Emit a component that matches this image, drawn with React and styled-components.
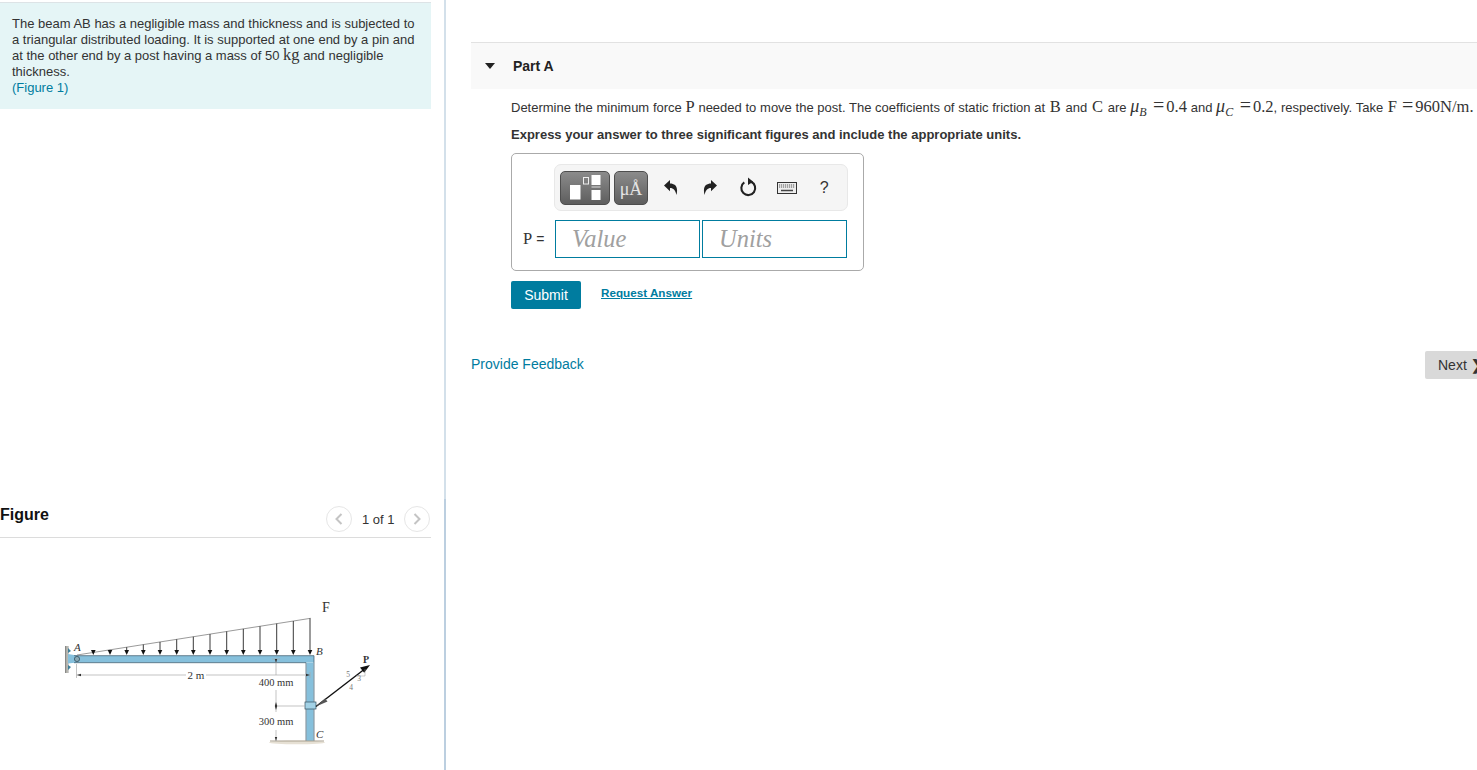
import React from 'react';
import styled, { createGlobalStyle } from 'styled-components';

const GlobalStyle = createGlobalStyle`
  html, body {
    margin: 0;
    height: 100%;
    overflow: hidden;
    background: #fff;
  }
  body {
    color: #333;
    font-family: "Liberation Sans", Arial, sans-serif;
    font-size: 14px;
  }
`;

const Page = styled.div`
  display: flex;
  width: 1477px;
  height: 770px;
  overflow: hidden;
`;

const LeftColumn = styled.div`
  display: flex;
  flex: none;
  flex-direction: column;
  width: 446px;
`;

const IntroArea = styled.div`
  box-sizing: border-box;
  height: 499px;
  padding-top: 2px;
  border-right: 2px solid #d3e0ea;
`;

const Intro = styled.div`
  box-sizing: border-box;
  width: 431px;
  height: 107px;
  padding: 13px 12px 0;
  font-size: 13px;
  line-height: 16px;
  background: #e5f5f6;
  border-top: 1px solid #dde3e6;
`;

const FigureLink = styled.a`
  color: #007c9f;
`;

const FigureArea = styled.div`
  flex: 1;
  box-sizing: border-box;
  border-right: 2px solid #bccfe0;
`;

const FigureHeader = styled.div`
  display: flex;
  align-items: center;
  justify-content: space-between;
  box-sizing: border-box;
  width: 431px;
  height: 39px;
  padding: 1px 1px 0 0;
  border-bottom: 1px solid #dcdcdc;
`;

const FigureTitle = styled.h2`
  margin: 0 0 8px;
  color: #111;
  font-size: 16px;
  font-weight: 700;
`;

const Pager = styled.div`
  display: flex;
  align-items: center;
  gap: 10px;
  font-size: 13px;
`;

const PagerLabel = styled.span`
  width: 32px;
  padding-top: 2px;
  white-space: nowrap;
`;

const PagerButton = styled.span`
  display: flex;
  align-items: center;
  justify-content: center;
  box-sizing: border-box;
  width: 26px;
  height: 26px;
  border: 1px solid #e6e6e6;
  border-radius: 50%;
`;

const Diagram = styled.svg`
  display: block;
  margin: 52px 0 0 40px;
`;

const RightColumn = styled.div`
  flex: none;
  box-sizing: border-box;
  width: 1031px;
  padding: 42px 0 0 25px;
`;

const PartHeader = styled.div`
  display: flex;
  align-items: center;
  box-sizing: border-box;
  height: 47px;
  padding: 0 0 0 14px;
  background: #f9f9f9;
  border-top: 1px solid #e2e2e2;
`;

const Caret = styled.span`
  width: 0;
  height: 0;
  border-top: 6px solid #222;
  border-right: 5.5px solid transparent;
  border-left: 5.5px solid transparent;
`;

const PartTitle = styled.h3`
  margin: 0 0 0 18px;
  color: #222;
  font-size: 14px;
  font-weight: 700;
`;

const PartBody = styled.div`
  padding: 10px 0 0 40px;
`;

const Question = styled.p`
  height: 18px;
  margin: 0;
  font-size: 13px;
  line-height: 18px;
  word-spacing: 0.1px;
  white-space: nowrap;
`;

const Serif = styled.span`
  font-family: "Liberation Serif", "Times New Roman", serif;
  font-size: 16.5px;
  line-height: 0;
`;

const MathLetter = styled(Serif)`
  margin: 0 1px;
`;

// the equals sign sits wider in the math font of the page
const Equals = styled.span`
  margin: 0 2px 0 4px;
  font-family: "Liberation Serif", "Times New Roman", serif;
  font-size: 20px;
  line-height: 0;
`;

const Mu = styled.i`
  font-family: "Liberation Serif", "Times New Roman", serif;
  font-size: 18px;
  line-height: 0;
`;

const Sub = styled.sub`
  margin-right: 2.5px;
  font-family: "Liberation Serif", "Times New Roman", serif;
  font-size: 12px;
  font-style: italic;
  line-height: 0;
`;

const Instruction = styled.p`
  margin: 9px 0 0;
  color: #333;
  font-size: 13px;
  font-weight: 700;
  line-height: 18px;
`;

const AnswerBox = styled.div`
  box-sizing: border-box;
  width: 353px;
  height: 118px;
  margin-top: 9px;
  padding: 10px 16px 0 0;
  border: 1px solid #aaa;
  border-radius: 5px;
`;

const Toolbar = styled.div`
  display: flex;
  align-items: center;
  box-sizing: border-box;
  width: 294px;
  height: 47px;
  margin-left: 42px;
  padding-left: 5px;
  background: #f5f5f5;
  border: 1px solid #e8e8e8;
  border-radius: 7px;
`;

const ToolGroup = styled.span`
  display: flex;
  flex: none;
  align-items: center;
  justify-content: center;
  box-sizing: border-box;
  width: ${(props) => props.$width}px;
  height: 34px;
  margin-right: 4px;
  color: #e4e4e4;
  background: linear-gradient(#8b8b8b, #5e5e5e);
  border: 1px solid #4e4e4e;
  border-radius: 5px;
`;

const MicroText = styled.span`
  font-family: "Liberation Serif", "Times New Roman", serif;
  font-size: 18px;
  line-height: 1;
  padding-top: 3px;
`;

const ToolIcon = styled.span`
  display: flex;
  flex: none;
  align-items: center;
  justify-content: center;
  width: 38.5px;
  height: 34px;
  color: #333;
  font-size: ${(props) => props.$size || 14}px;
`;

const HelpMark = styled.span`
  margin-right: 2px;
`;

const AnswerRow = styled.div`
  display: flex;
  align-items: center;
  margin-top: 9px;
`;

const AnswerLabel = styled.label`
  display: flex;
  flex: none;
  align-items: baseline;
  gap: 4px;
  box-sizing: border-box;
  width: 43px;
  padding-left: 11px;
  font-size: 14px;
`;

const AnswerField = styled.div`
  display: flex;
  flex: none;
  align-items: center;
  box-sizing: border-box;
  width: 145px;
  height: 38px;
  margin-right: 2px;
  padding-left: 16px;
  color: #a0a0a0;
  font-family: "Liberation Serif", "Times New Roman", serif;
  font-size: 24.5px;
  font-style: italic;
  border: 1px solid #007c9f;
`;

const Actions = styled.div`
  display: flex;
  align-items: center;
  margin-top: 10px;
`;

const SubmitButton = styled.button`
  width: 70px;
  height: 28px;
  padding: 0;
  color: #fff;
  font-family: inherit;
  font-size: 14px;
  background: #007c9f;
  border: none;
  border-radius: 2px;
`;

const RequestLink = styled.a`
  margin: 0 0 6px 20px;
  color: #007c9f;
  font-size: 11.7px;
  font-weight: 700;
  text-decoration: underline;
`;

const FooterRow = styled.div`
  display: flex;
  align-items: center;
  justify-content: space-between;
  height: 28px;
  margin-top: 42px;
`;

const FeedbackLink = styled.a`
  margin-bottom: 2px;
  color: #007c9f;
  font-size: 14px;
`;

const NextButton = styled.span`
  display: flex;
  align-items: center;
  gap: 4px;
  box-sizing: border-box;
  width: 52px;
  height: 28px;
  padding-left: 13px;
  color: #333;
  white-space: nowrap;
  background: #d9d9d9;
  border-radius: 2px 0 0 2px;
`;

const loadX = [93.3, 110, 126.7, 143.3, 160, 176.7, 193.3, 210, 226.7, 243.3, 260, 276.7, 293.3, 310];

// drawn in page coordinates, the svg sits at 40,590
const BeamDiagram = () => (
  <Diagram width="360" height="180" viewBox="40 590 360 180">
    <defs>
      <linearGradient id="wall" x1="0" x2="1" y1="0" y2="0">
        <stop offset="0" stopColor="#777" />
        <stop offset="0.6" stopColor="#c4c4bc" />
        <stop offset="1" stopColor="#999" />
      </linearGradient>
    </defs>
    <ellipse cx="297" cy="742.5" rx="28" ry="1.8" fill="#e6e0d4" />
    <rect x="65" y="646" width="3.5" height="27" fill="url(#wall)" />
    <path d="M68 648l3 3-3 2zM68 665l3 2-3 3z" fill="#3f7f99" />
    <path d="M68 654l9 1.5v7l-9 1z" fill="#86c0dc" />
    <rect x="74" y="655.7" width="240" height="7" fill="#86c0dc" />
    <rect x="306.4" y="663" width="7.2" height="78" fill="#86c0dc" />
    <path d="M74 655.7H314V741M74 662.7H306V741" fill="none" stroke="#3a5565" strokeWidth="0.7" />
    <rect x="305" y="702" width="11" height="7" fill="#a3d2e6" stroke="#35505f" strokeWidth="0.7" />
    <circle cx="77" cy="659" r="2.6" fill="#8aa9b5" stroke="#34505f" strokeWidth="0.8" />
    <path d="M270 741h54" stroke="#a89f8e" strokeWidth="1" />

    <path d="M77 655L310.7 618.3" stroke="#555" strokeWidth="0.6" fill="none" />
    {loadX.map((x) => {
      const top = 655 - ((x - 77) * 36.7) / 233.7;
      return (
        <g key={x}>
          <path d={`M${x} ${top}V650`} stroke="#222" strokeWidth="0.9" />
          <path d={`M${x - 2.3} 650l2.3 5 2.3-5z`} fill="#111" />
        </g>
      );
    })}

    <path d="M76.5 664v14M76.5 675H186M206 675H305M310 672v6" stroke="#aaa" strokeWidth="0.7" fill="none" />
    <path d="M77 675l4-1.2v2.4z" fill="#333" />
    <path d="M310 675l-4-1.2v2.4z" fill="#333" />
    <path d="M276 659v16M276 690v22M276 730v11M272 659h8M276 706h29" stroke="#aaa" strokeWidth="0.7" fill="none" />
    <path d="M276 663l-1.2-4h2.4zM276 702l-1.2 4h2.4zM276 710l-1.2-4h2.4zM276 741l-1.2-4h2.4z" fill="#333" />

    <path d="M316 706.5L366 668" stroke="#111" strokeWidth="1.4" />
    <path d="M316 706.5l9-8 2.5 3z" fill="#555" />
    <path d="M370 665l-10 2.5 4.2 5.2z" fill="#111" />
    <path d="M356 676h9v-7" stroke="#999" strokeWidth="0.5" fill="none" />

    <g fontFamily="'Liberation Serif', serif" fill="#333">
      <text x="326" y="612" fontSize="14" textAnchor="middle">F</text>
      <text x="196" y="678.5" fontSize="11" textAnchor="middle">2 m</text>
      <text x="276" y="686" fontSize="10.5" textAnchor="middle">400 mm</text>
      <text x="276" y="725" fontSize="10.5" textAnchor="middle">300 mm</text>
      <text x="366" y="662.5" fontSize="10" fontWeight="700" textAnchor="middle">P</text>
      <g fontSize="7.5" fill="#777" textAnchor="middle">
        <text x="348" y="677">5</text>
        <text x="359" y="681">3</text>
        <text x="351" y="690">4</text>
      </g>
      <g fontStyle="italic" fontSize="11">
        <text x="74" y="651">A</text>
        <text x="316" y="655">B</text>
        <text x="316" y="738">C</text>
      </g>
    </g>
  </Diagram>
);

const TemplateIcon = () => (
  <svg width="31" height="25" viewBox="0 0 31 25">
    <rect x="0" y="10" width="10.5" height="14.5" fill="#fff" />
    <rect x="13.5" y="2.5" width="5" height="6.5" fill="none" stroke="#eee" />
    <rect x="21.5" y="0" width="9" height="10" fill="#fff" />
    <rect x="21.5" y="11.5" width="9" height="1" fill="#ddd" />
    <rect x="21.5" y="15" width="9" height="10" fill="#fff" />
  </svg>
);

const UndoIcon = ({ flip }) => (
  <svg width="14" height="15" viewBox="0 0 14 15" style={flip ? { transform: 'scaleX(-1)' } : undefined}>
    <path d="M0 5.5L6 0v3.5C11 3.5 14.5 6.5 12.5 15 11.5 10.5 9.5 8 6 8v3.2z" fill="#222" />
  </svg>
);

const ResetIcon = () => (
  <svg width="19" height="21" viewBox="0 0 18 20">
    <path d="M11.5 4.6A6.6 6.6 0 1 1 5 5.2" fill="none" stroke="#222" strokeWidth="2" />
    <path d="M8.5 0.5l5 4-5 3.2z" fill="#222" />
  </svg>
);

const KeyboardIcon = () => (
  <svg width="20" height="12" viewBox="0 0 20 12">
    <rect x="0.5" y="0.5" width="19" height="11" fill="#eee" stroke="#333" />
    <path d="M2 3h16M2 5h16" stroke="#555" strokeWidth="1" strokeDasharray="1.2 0.8" />
    <path d="M4 8.5h12" stroke="#444" strokeWidth="1.5" />
  </svg>
);

const Chevron = ({ points }) => (
  <svg width="10" height="14" viewBox="0 0 10 14">
    <polyline points={points} fill="none" stroke="#c4c4c4" strokeWidth="2" />
  </svg>
);

const App = () => (
  <Page>
    <GlobalStyle />
    <LeftColumn>
      <IntroArea>
        <Intro>
          The beam AB has a negligible mass and thickness and is subjected to
          a triangular distributed loading. It is supported at one end by a pin and
          at the other end by a post having a mass of 50 <Serif>kg</Serif> and negligible
          thickness.
          <br />
          <FigureLink>(Figure 1)</FigureLink>
        </Intro>
      </IntroArea>
      <FigureArea>
        <FigureHeader>
          <FigureTitle>Figure</FigureTitle>
          <Pager>
            <PagerButton>
              <Chevron points="7.5,2 2.5,7 7.5,12" />
            </PagerButton>
            <PagerLabel>1 of 1</PagerLabel>
            <PagerButton>
              <Chevron points="2.5,2 7.5,7 2.5,12" />
            </PagerButton>
          </Pager>
        </FigureHeader>
        <BeamDiagram />
      </FigureArea>
    </LeftColumn>

    <RightColumn>
      <PartHeader>
        <Caret />
        <PartTitle>Part A</PartTitle>
      </PartHeader>
      <PartBody>
        <Question>
          Determine the minimum force <Serif>P</Serif> needed to move the post. The
          coefficients of static friction at <MathLetter>B</MathLetter> and <MathLetter>C</MathLetter> are{' '}
          <Mu>μ</Mu><Sub>B</Sub><Equals>=</Equals><Serif>0.4</Serif> and <Mu>μ</Mu><Sub>C</Sub>
          <Equals>=</Equals><Serif>0.2</Serif>, respectively. Take <MathLetter>F</MathLetter>
          <Equals>=</Equals><Serif>960N/m.</Serif>
        </Question>
        <Instruction>Express your answer to three significant figures and include the appropriate units.</Instruction>
        <AnswerBox>
          <Toolbar>
            <ToolGroup $width={50}>
              <TemplateIcon />
            </ToolGroup>
            <ToolGroup $width={34}>
              <MicroText>μÅ</MicroText>
            </ToolGroup>
            <ToolIcon><UndoIcon /></ToolIcon>
            <ToolIcon><UndoIcon flip /></ToolIcon>
            <ToolIcon><ResetIcon /></ToolIcon>
            <ToolIcon><KeyboardIcon /></ToolIcon>
            <ToolIcon $size={16}><HelpMark>?</HelpMark></ToolIcon>
          </Toolbar>
          <AnswerRow>
            <AnswerLabel>
              <Serif>P</Serif> =
            </AnswerLabel>
            <AnswerField>Value</AnswerField>
            <AnswerField>Units</AnswerField>
          </AnswerRow>
        </AnswerBox>
        <Actions>
          <SubmitButton>Submit</SubmitButton>
          <RequestLink>Request Answer</RequestLink>
        </Actions>
      </PartBody>
      <FooterRow>
        <FeedbackLink>Provide Feedback</FeedbackLink>
        <NextButton>Next <b>❯</b></NextButton>
      </FooterRow>
    </RightColumn>
  </Page>
);

export default App;
